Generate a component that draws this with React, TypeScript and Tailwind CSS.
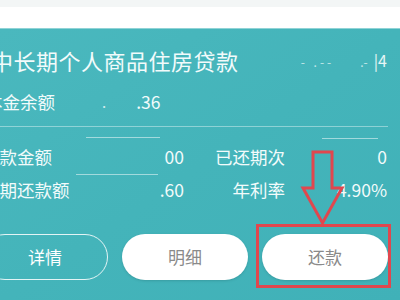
import React from "react";

const rows = [
  { label: "还款金额", value: "00", rLabel: "已还期次", rValue: "0" },
  { label: "每期还款额", value: ".60", rLabel: "年利率", rValue: "4.90%" },
];

export default function App() {
  return (
    <div className="w-[400px] h-[300px] overflow-hidden bg-white font-['Noto_Sans_CJK_SC','Noto_Sans',sans-serif]">
      <div className="h-[7px] bg-[#f3f6f6]" />
      <div className="h-[21px] bg-white" />

      {/* loan card */}
      <div className="relative h-[272px] border-t border-[#8fd3d6] bg-gradient-to-br from-[#4ab8be] via-[#44b4ba] to-[#40b1b8] text-[#f2fbfb]">
        <div className="flex items-center h-[28px] mt-[17px]">
          <span className="ml-[-9px] text-[22px] leading-none tracking-[0.5px]">中长期个人商品住房贷款</span>
          <div className="ml-auto mr-[13px] flex items-center text-[15px] leading-none text-[#e6f6f6]">
            <span className="opacity-80 text-[12px] mt-[4px] tracking-[3px]">- .--</span>
            <span className="ml-[26px] opacity-80 text-[12px] mt-[4px]">.-</span>
            <span className="ml-[6px] text-[16px]">|4</span>
          </div>
        </div>

        <div className="flex items-center h-[26px] mt-[15px] text-[17.5px]">
          <span className="ml-[-15px]">本金余额</span>
          <span className="ml-[47px] text-[15px] opacity-80">.</span>
          <span className="ml-[30px]">.36</span>
        </div>

        <div className="mt-[11px] mr-[12px] h-px bg-white/40" />

        <div className="mt-[17px] flex flex-col gap-[7px]">
          {rows.map((r) => (
            <div key={r.label} className="flex items-center h-[26px] text-[17.5px]">
              <div className="ml-[-18px] w-[202px] flex justify-between">
                <span>{r.label}</span>
                <span>{r.value}</span>
              </div>
              <span className="w-[101px] text-right">{r.rLabel}</span>
              <span className="flex-1 text-right pr-[13px]">{r.rValue}</span>
            </div>
          ))}
        </div>

        <div className="mt-[31px] flex gap-[14px] ml-[-18px] h-[46px]">
          <button className="w-[126px] rounded-full border-[1.5px] border-white/85 text-[17px] text-white">详情</button>
          <button className="w-[126px] rounded-full bg-white text-[17px] text-[#8a8a8a] shadow-sm">明细</button>
          <button className="w-[126px] rounded-full bg-white text-[17px] text-[#8a8a8a] shadow-sm">还款</button>
        </div>

        {/* redaction remnants */}
        <div className="absolute left-[86px] top-[108px] w-[74px] h-px bg-white/50" />
        <div className="absolute left-[322px] top-[109px] w-[56px] h-px bg-white/50" />
        <div className="absolute left-[76px] top-[145px] w-[82px] h-px bg-white/50" />

        {/* annotation */}
        <svg className="absolute left-[300px] top-[120px]" width="46" height="78" viewBox="0 0 46 78" fill="none">
          <path d="M13 3 H32 V39 H42 L22.5 74 L3 39 H13 Z" stroke="#e0474e" strokeWidth="3" strokeLinejoin="miter" />
        </svg>
        <div className="absolute left-[256px] top-[195px] w-[135px] h-[64px] border-[3px] border-[#e0474e]" />
      </div>
    </div>
  );
}
